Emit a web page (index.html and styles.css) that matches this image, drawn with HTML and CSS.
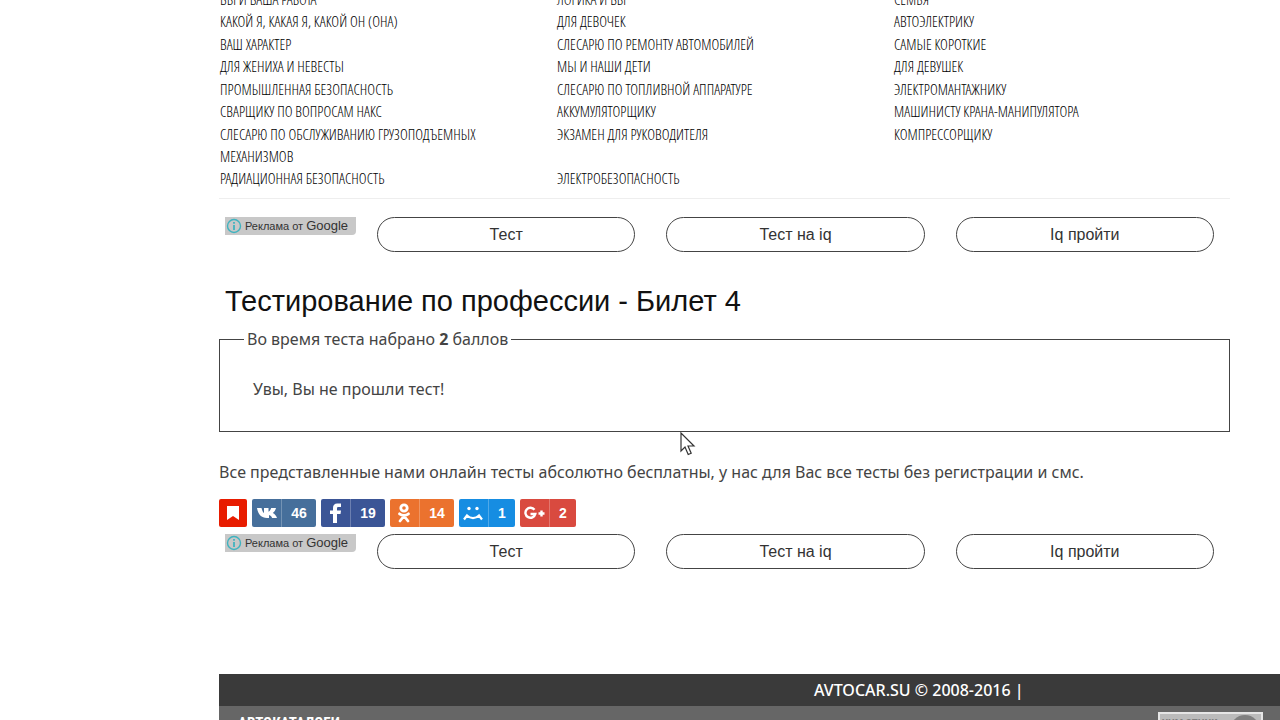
FILE: index.html
```
<!DOCTYPE html>
<html lang="ru">
<head>
  <meta charset="UTF-8">
  <title>Тестирование по профессии - Билет 4</title>
  <meta name="viewport" content="width=device-width, initial-scale=1.0">
  <link rel="stylesheet" href="styles.css">
</head>
<body>

<div class="page">
  <div class="content">
    <nav class="tests">
      <a href="#">Вы и Ваша работа</a>
      <a href="#">Логика и Вы</a>
      <a href="#">Семья</a>
      <a href="#">Какой я, какая я, какой он (она)</a>
      <a href="#">Для девочек</a>
      <a href="#">Автоэлектрику</a>
      <a href="#">Ваш характер</a>
      <a href="#">Слесарю по ремонту автомобилей</a>
      <a href="#">Самые короткие</a>
      <a href="#">Для жениха и невесты</a>
      <a href="#">Мы и наши дети</a>
      <a href="#">Для девушек</a>
      <a href="#">Промышленная безопасность</a>
      <a href="#">Слесарю по топливной аппаратуре</a>
      <a href="#">Электромантажнику</a>
      <a href="#">Сварщику по вопросам НАКС</a>
      <a href="#">Аккумуляторщику</a>
      <a href="#">Машинисту крана-манипулятора</a>
      <a href="#">Слесарю по обслуживанию грузоподъемных механизмов</a>
      <a href="#">Экзамен для руководителя</a>
      <a href="#">Компрессорщику</a>
      <a href="#">Радиационная безопасность</a>
      <a href="#">Электробезопасность</a>
    </nav>

    <div class="ads">
      <a class="ads-label" href="#">
        <svg width="16" height="16" viewBox="0 0 16 16"><circle cx="8" cy="8" r="6.500" fill="none" stroke="#3fb3bf" stroke-width="1.400"/><path d="M8 4v1.800M8 7v5" stroke="#3fb3bf" stroke-width="1.800"/></svg>
        <span>Реклама от <b>Google</b></span>
      </a>
      <a class="pill" href="#">Тест</a>
      <a class="pill" href="#">Тест на iq</a>
      <a class="pill" href="#">Iq пройти</a>
    </div>

    <h1>Тестирование по профессии - Билет 4</h1>

    <fieldset>
      <legend>Во время теста набрано <b>2</b> баллов</legend>
      <p>Увы, Вы не прошли тест!</p>
      <svg class="cursor" width="16" height="24" viewBox="0 0 16 24"><path d="M1 1v18l4-4 3.200 7.500 3-1.300L8 14h6z" fill="#fff" stroke="#333" stroke-width="1.200"/></svg>
    </fieldset>

    <p class="note">Все представленные нами онлайн тесты абсолютно бесплатны, у нас для Вас все тесты без регистрации и смс.</p>

    <div class="share">
      <button class="mark" aria-label="В закладки">
        <svg width="28" height="28" viewBox="0 0 28 28"><path d="M8 7h12v14l-6-4-6 4z" fill="#fff"/></svg>
      </button>
      <button class="vk">
        <svg width="29" height="28" viewBox="0 0 29 28"><path d="M5 9h4.500c.8 3 1.700 4.600 2.500 5V9h4.500v3.800c1-.5 2-2 2.700-3.800H24c-.5 2.200-1.700 3.900-3.200 5 1.900 1 3.300 2.600 4.200 5h-4.800c-.6-1.600-1.700-2.600-3.200-3V19h-2C9.500 19 6 15.500 5 9z" fill="#fff"/></svg>
        <span>46</span>
      </button>
      <button class="fb">
        <svg width="29" height="28" viewBox="0 0 29 28"><path d="M12 24v-9H9v-3.500h3V9c0-3 1.600-4.500 4.200-4.500H20V8h-2.500c-1 0-1.500.5-1.500 1.400v2.100h4l-.5 3.500H16v9z" fill="#fff"/></svg>
        <span>19</span>
      </button>
      <button class="ok">
        <svg width="29" height="28" viewBox="0 0 29 28"><g fill="none" stroke="#fff" stroke-width="2.800" stroke-linecap="round"><circle cx="14" cy="9" r="3.200"/><path d="M9.500 14.800c2.500 2 6.500 2 9 0M14 17l-4 5M14 17l4 5"/></g></svg>
        <span>14</span>
      </button>
      <button class="mm">
        <svg width="29" height="28" viewBox="0 0 29 28"><g fill="#fff"><circle cx="10" cy="9.500" r="1.700"/><circle cx="18" cy="9.500" r="1.700"/></g><path d="M5 20.500l3-4c3.500 3.500 8.500 3.500 12 0l3 4" fill="none" stroke="#fff" stroke-width="2.200"/></svg>
        <span>1</span>
      </button>
      <button class="gp">
        <svg width="29" height="28" viewBox="0 0 29 28"><path d="M14.500 10.800a5 5 0 1 0 .8 4.200H10.500M18.500 14.500h6M21.500 11.500v6" fill="none" stroke="#fff" stroke-width="2.400"/></svg>
        <span>2</span>
      </button>
    </div>

    <div class="ads">
      <a class="ads-label" href="#">
        <svg width="16" height="16" viewBox="0 0 16 16"><circle cx="8" cy="8" r="6.500" fill="none" stroke="#3fb3bf" stroke-width="1.400"/><path d="M8 4v1.800M8 7v5" stroke="#3fb3bf" stroke-width="1.800"/></svg>
        <span>Реклама от <b>Google</b></span>
      </a>
      <a class="pill" href="#">Тест</a>
      <a class="pill" href="#">Тест на iq</a>
      <a class="pill" href="#">Iq пройти</a>
    </div>
  </div>

  <footer>
    <div class="copyright">AVTOCAR.SU © 2008-2016 |</div>
    <div class="footer-menu">
      <a href="#">Автокаталоги</a>
      <svg class="counter" width="105" height="38" viewBox="0 0 105 38"><rect x="1" y="1" width="103" height="36" fill="#bbb" stroke="#e6e6e6" stroke-width="2"/><circle cx="87" cy="18" r="15" fill="#808080"/><text x="4" y="15" font-size="11" fill="#808080">YHM CTHNK</text></svg>
    </div>
  </footer>
</div>

</body>
</html>
```
FILE: styles.css
```
body {
  margin: 0;
  height: 100vh;
  overflow: hidden;
  background: #fff;
  color: #444;
  font: 16px/22px "Noto Sans", "Open Sans", sans-serif;
}

.page {
  margin-left: 219px;
}

.content {
  margin-right: 50px;
}

a {
  color: inherit;
  text-decoration: none;
}

.tests {
  display: grid;
  grid-template-columns: repeat(3, 1fr);
  align-content: space-between;
  min-height: 201px;
  margin-top: -12px;
  padding-bottom: 9px;
  border-bottom: 1px solid #eee;
  color: #000;
  font-family: "Noto Sans ExtraCondensed", "Open Sans Condensed Light", "Roboto Condensed", sans-serif;
  font-size: 15px;
  text-transform: uppercase;
}

.tests a {
  padding: 0 50px 0 1px;
}

.ads {
  display: flex;
  align-items: flex-start;
  gap: 31px;
  padding: 0 16px 0 6px;
  font-family: "Liberation Sans", sans-serif;
}

.tests + .ads {
  margin-top: 18px;
}

.ads-label {
  display: flex;
  align-items: center;
  gap: 3px;
  box-sizing: border-box;
  width: 131px;
  height: 18px;
  margin-right: -10px;
  padding-left: 1px;
  background: #c8c8c8;
  border-bottom-right-radius: 4px;
  color: #333;
  font-size: 11px;
  white-space: nowrap;
}

.ads-label b {
  font-size: 13px;
  font-weight: normal;
}

.pill {
  flex: 1;
  border: 1px solid #444;
  border-radius: 18px;
  color: #333;
  font-size: 16px;
  line-height: 33px;
  text-align: center;
}

h1 {
  margin: 32px 0 10px 6px;
  color: #111;
  font: 29px/34px "Liberation Sans", sans-serif;
}

fieldset {
  position: relative;
  margin: 0;
  padding: 28px 33px 31px 24px;
  border: 1px solid #444;
}

legend {
  padding: 0 3px;
}

fieldset p {
  margin: 0 0 0 9px;
}

.cursor {
  position: absolute;
  left: 460px;
  top: 82px;
}

.note {
  margin: 29px 0 16px;
}

.share {
  display: flex;
  gap: 5px;
  margin-bottom: 7px;
}

.share button {
  display: flex;
  align-items: center;
  height: 28px;
  padding: 0;
  border: 0;
  border-radius: 2px;
  color: #fff;
  font: bold 14px/28px "Liberation Sans", sans-serif;
}

.share span {
  min-width: 26px;
  padding: 0 4px;
  border-left: 1px solid rgba(255, 255, 255, 0.25);
}

.share .mm span,
.share .gp span {
  min-width: 18px;
}

.mark { background: #e81c00; }
.vk { background: #466f9b; }
.fb { background: #3b5596; }
.ok { background: #eb722e; }
.mm { background: #168de2; }
.gp { background: #d94a3f; }

footer {
  margin-top: 105px;
  background: #666;
  color: #fff;
}

.copyright {
  padding-left: 595px;
  background: #3a3a3a;
  font-weight: 500;
  line-height: 32px;
}

.footer-menu {
  display: flex;
  justify-content: space-between;
  padding: 6px 17px 0 19px;
  font: bold 15px/22px "Roboto Condensed", sans-serif;
  text-transform: uppercase;
}
```
